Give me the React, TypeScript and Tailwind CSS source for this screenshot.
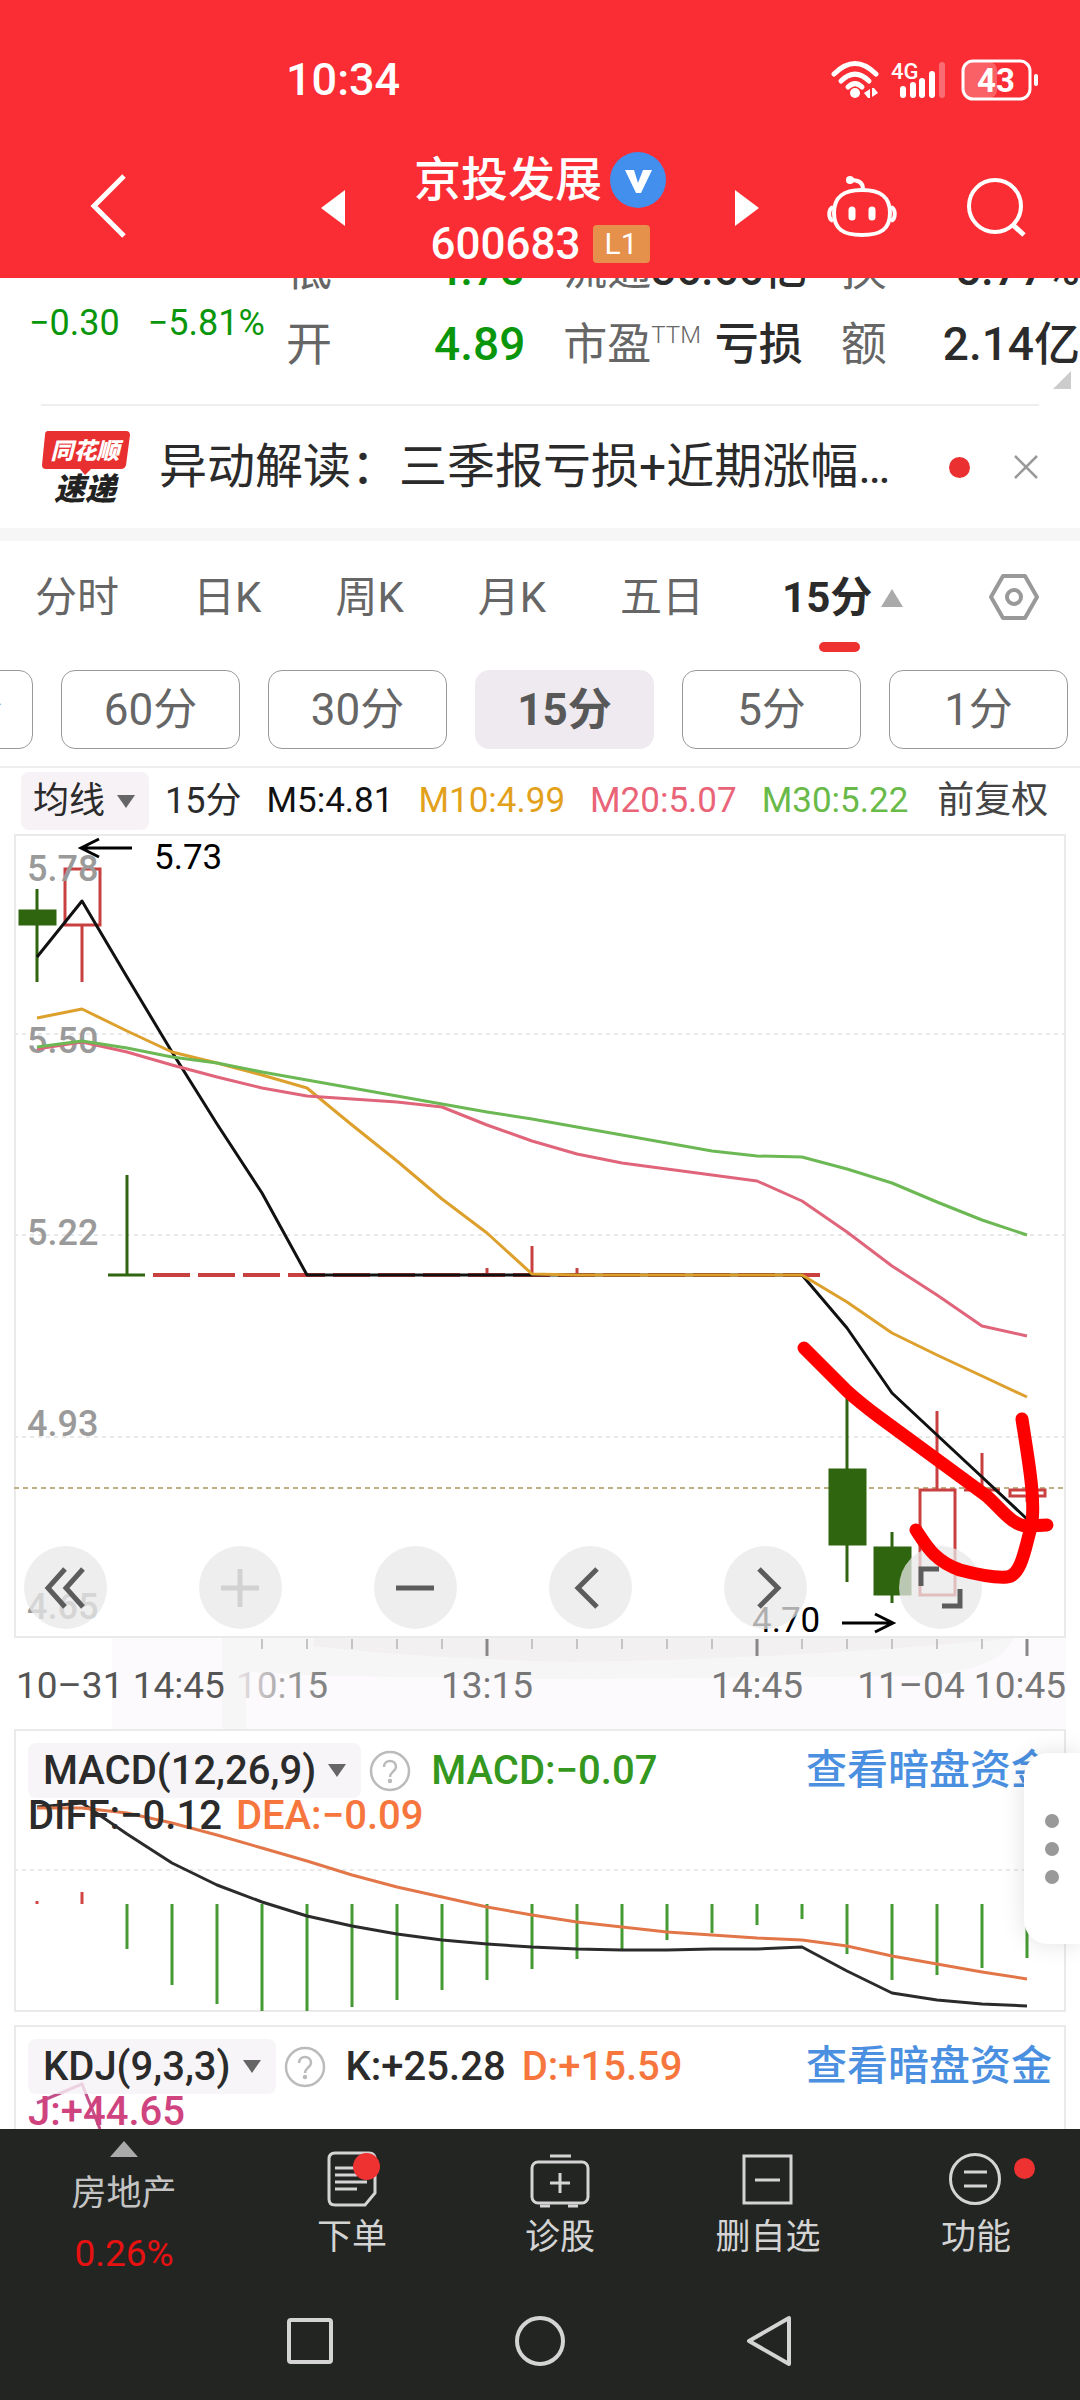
import type { ReactNode } from 'react';
import clsx from 'clsx';

const STEP = 45;
const X0 = 23;
const xAt = (i: number) => X0 + STEP * i;
const toPoints = (ys: number[]) => ys.map((y, i) => `${xAt(i)},${y}`).join(' ');

// Chart series, in chart units measured from the top of each panel
const MA5 = [123, 67, 143, 218, 290, 359, 441, 441, 441, 441, 441, 441, 441, 441, 441, 441, 441, 441, 494, 559, 601, 643, 685];
const MA10 = [184, 175, 197, 218, 229, 241, 254, 291, 327, 365, 399, 440, 441, 441, 441, 441, 441, 441, 468, 499, 521, 542, 563];
const MA20 = [215, 208, 218, 231, 243, 254, 262, 265, 268, 273, 291, 307, 320, 329, 335, 341, 347, 367, 398, 432, 461, 492, 502];
const MA30 = [213, 207, 214, 223, 229, 238, 246, 254, 262, 270, 278, 285, 293, 301, 309, 317, 322, 323, 335, 349, 368, 386, 401];

const DIFF = [78, 74, 105, 134, 156, 173, 187, 197, 205, 211, 215, 218, 220, 221, 221, 220, 220, 218, 242, 264, 271, 275, 277];
const DEA = [79, 79, 84, 94, 106, 119, 132, 146, 158, 168, 178, 186, 193, 198, 203, 206, 209, 211, 217, 227, 235, 243, 250];
const MACD_BARS = [-3, -12, 45, 81, 100, 107, 107, 103, 96, 86, 76, 65, 55, 45, 36, 29, 21, 15, 50, 76, 71, 64, 54];

type Candle = { i: number; high: number; low: number; top: number; bottom: number; up: boolean };

const CANDLES: Candle[] = [
  { i: 0, high: 55, low: 148, top: 77, bottom: 90, up: false },
  { i: 1, high: 35, low: 148, top: 35, bottom: 91, up: true },
  { i: 18, high: 564, low: 748, top: 636, bottom: 710, up: false },
  { i: 19, high: 698, low: 769, top: 714, bottom: 760, up: false },
  { i: 20, high: 577, low: 761, top: 656, bottom: 761, up: true },
  { i: 22, high: 656, low: 668, top: 656, bottom: 662, up: true },
];

const FLAT_BARS = [3, 4, 5, 6, 7, 8, 9, 10, 11, 12, 13, 14, 15, 16, 17];
const TICKS = [5, 6, 7, 8, 9, 10, 11, 12, 13, 14, 15, 16, 17, 18, 19, 20, 21, 22];
const MAJOR_TICKS = [10, 16, 22];

const TABS = ['分时', '日K', '周K', '月K', '五日'];
const PERIODS = ['120分', '60分', '30分', '15分', '5分', '1分'];

function StatusBar() {
  return (
    <div className="flex items-center justify-between pt-[52px] pl-[286px] pr-[41px] text-white">
      <span className="text-[45px] leading-[56px] font-medium">10:34</span>
      <div className="flex items-center">
        <svg width="50" height="40" viewBox="0 0 50 40" fill="none" stroke="#fff" strokeWidth="5" strokeLinecap="round">
          <path d="M3 14Q24 -7 45 14" />
          <path d="M10 21Q24 7 38 21" />
          <path d="M17 27Q24 20 31 27" />
          <circle cx="24" cy="33" r="5" fill="#fff" stroke="none" />
          <path d="M33 33l6-4v9h-2zM47 33l-6 4v-9h2z" fill="#fff" stroke="none" />
        </svg>
        <svg width="58" height="40" viewBox="0 0 58 40" className="ml-[10px] mr-3">
          <text x="0" y="19" fontSize="22" fontWeight="500" fill="#fff">4G</text>
          <g stroke="#fff" strokeWidth="6" strokeLinecap="round">
            <path d="M12 29v6M22 25v10M31 21v14M41 14v21" />
            <path d="M51 5v30" opacity="0.3" />
          </g>
        </svg>
        <svg width="78" height="42" viewBox="0 0 78 42">
          <rect x="3" y="3" width="33" height="36" rx="8" fill="#fff" opacity="0.25" />
          <rect x="2" y="2" width="67" height="38" rx="10" fill="none" stroke="#fff" strokeWidth="3" />
          <rect x="73" y="15" width="4" height="12" rx="2" fill="#fff" />
          <text x="35" y="33" fontSize="33" fontWeight="700" fill="#fff" textAnchor="middle">43</text>
        </svg>
      </div>
    </div>
  );
}

function TitleBar() {
  return (
    <div className="grid grid-cols-[1fr_auto_1fr] items-center pt-10 pb-[2px] text-white">
      <div className="flex items-center justify-between pb-3 pl-[88px] pr-[68px]">
        <button type="button" aria-label="返回">
          <svg width="40" height="66" viewBox="0 0 40 66" fill="none" stroke="#fff" strokeWidth="5">
            <path d="M36 3L6 33l30 30" />
          </svg>
        </button>
        <button type="button" aria-label="上一只" className="pt-1">
          <svg width="26" height="36" viewBox="0 0 26 36" fill="#fff"><path d="M25 0v36L1 18z" /></svg>
        </button>
      </div>
      <div className="flex flex-col items-center">
        <div className="flex items-center gap-2">
          <h1 className="text-[47px] leading-[64px] font-medium">京投发展</h1>
          <svg width="56" height="56" viewBox="0 0 56 56">
            <circle cx="28" cy="28" r="28" fill="#428fee" />
            <path d="M15 18h9l4 13 5-13h9L31 41h-5z" fill="#fff" />
          </svg>
        </div>
        <div className="flex items-center gap-3">
          <span className="text-[44px] leading-[64px] font-medium">600683</span>
          <span className="rounded-sm bg-[#e5904b] px-3 text-[30px] leading-[38px]">L1</span>
        </div>
      </div>
      <div className="flex items-center justify-between pb-3 pl-[68px] pr-[52px]">
        <button type="button" aria-label="下一只" className="pt-1">
          <svg width="26" height="36" viewBox="0 0 26 36" fill="#fff"><path d="M1 0v36l24-18z" /></svg>
        </button>
        <button type="button" aria-label="智能助手">
          <svg width="70" height="66" viewBox="0 0 70 66" fill="none" stroke="#fff" strokeWidth="4">
            <path d="M35 17C54 17 63 24 63 40C63 56 54 62 35 62S7 56 7 40C7 24 16 17 35 17Z" />
            <path d="M6 34C1 36 1 46 6 48M64 34c5 2 5 12 0 14" />
            <path d="M36 16C36 9 30 7 24 7" />
            <circle cx="23" cy="7" r="4" fill="#fff" stroke="none" />
            <path d="M25 37v7M45 37v7" strokeWidth="7" strokeLinecap="round" />
          </svg>
        </button>
        <button type="button" aria-label="搜索">
          <svg width="64" height="64" viewBox="0 0 64 64" fill="none" stroke="#fff" strokeWidth="4">
            <circle cx="31" cy="32" r="26" />
            <path d="M49 51l11 10" strokeWidth="5" />
          </svg>
        </button>
      </div>
    </div>
  );
}

function Stat({ label, sup, value, green }: { label: string; sup?: string; value: string; green?: boolean }) {
  return (
    <div className="flex h-[75px] items-center justify-between whitespace-nowrap">
      <dt className="flex items-center text-[46px] text-[#666]">
        <span className={label.length > 1 ? 'text-[44px]' : undefined}>{label}</span>
        {sup && <span className="pb-5 text-[24px] leading-[24px] font-light">{sup}</span>}
      </dt>
      <dd
        className={clsx(
          'font-medium',
          label.length > 1 ? 'text-[44px]' : 'text-[46px]',
          green ? 'text-[#0a960a]' : 'text-[#2b2b2b]',
        )}
      >
        {value}
      </dd>
    </div>
  );
}

function Quote() {
  return (
    <section className="relative h-[126px] overflow-hidden">
      <div className="flex">
        <div className="flex w-[286px] shrink-0 gap-[28px] pt-[25px] pl-[29px] text-[36px] leading-[40px] whitespace-nowrap text-[#0a960a]">
          <span>−0.30</span>
          <span>−5.81%</span>
        </div>
        <dl className="-mt-[46px] grid flex-1 grid-cols-[minmax(0,1fr)_minmax(0,1fr)_minmax(0,1fr)] gap-x-[38px]">
          <Stat label="低" value="4.70" green />
          <Stat label="流通" value="36.66亿" />
          <Stat label="换" value="5.77%" />
          <Stat label="开" value="4.89" green />
          <Stat label="市盈" sup="TTM" value="亏损" />
          <Stat label="额" value="2.14亿" />
        </dl>
      </div>
      <svg width="18" height="18" viewBox="0 0 18 18" className="absolute right-[9px] bottom-[15px]">
        <path d="M18 0v18H0z" fill="#ccc" />
      </svg>
    </section>
  );
}

function NewsBar() {
  return (
    <section className="mx-[41px] flex items-center border-t-2 border-[#eee] py-6">
      <svg width="90" height="74" viewBox="0 0 90 74" className="shrink-0" fontStyle="italic" fontWeight="900">
        <path d="M7 1h78q4 0 4 4l-4 30q-1 4-5 4H50l-6 6-5-6H5q-4 0-4-4L4 5q0-4 3-4z" fill="#e93030" />
        <text x="44" y="29" fontSize="23" fill="#fff" textAnchor="middle">同花顺</text>
        <text x="44" y="70" fontSize="31" fill="#222" textAnchor="middle">速递</text>
      </svg>
      <a href="#news" className="ml-7 min-w-0 flex-1 truncate text-[48px] leading-[72px] text-[#2b2b2b]">
        异动解读：三季报亏损+近期涨幅…
      </a>
      <span className="mx-[43px] size-[21px] shrink-0 rounded-full bg-[#ea3030]" />
      <button type="button" aria-label="关闭" className="shrink-0">
        <svg width="26" height="26" viewBox="0 0 26 26" stroke="#999" strokeWidth="2.5"><path d="M2 2l22 22M24 2L2 24" /></svg>
      </button>
    </section>
  );
}

function ChartTabs() {
  return (
    <nav className="flex items-start justify-between border-t-[13px] border-[#f6f6f6] pr-[41px] pl-[35px] text-[42px] leading-[64px] text-[#666]">
      <div className="flex items-start gap-[74px] pt-[25px]">
        {TABS.map((t) => (
          <button key={t} type="button">{t}</button>
        ))}
        <button type="button" className="relative flex items-center gap-2 pb-10 pl-1 font-bold text-[#2b2b2b]">
          15分
          <svg width="24" height="20" viewBox="0 0 24 20"><path d="M12 1l11 18H1z" fill="#aaa" /></svg>
          <span className="absolute bottom-[18px] left-[41px] h-[10px] w-[41px] rounded-full bg-[#ee3131]" />
        </button>
      </div>
      <button type="button" aria-label="设置" className="pt-8">
        <svg width="50" height="48" viewBox="0 0 50 48" fill="none" stroke="#999" strokeWidth="4" strokeLinejoin="round">
          <path d="M14 3h22l12 21-12 21H14L2 24z" />
          <circle cx="25" cy="24" r="7" />
        </svg>
      </button>
    </nav>
  );
}

function PeriodBar() {
  return (
    <div className="overflow-hidden border-b-2 border-[#eee] pb-[17px]">
      <div className="-ml-[146px] flex gap-[28px]">
        {PERIODS.map((p) => (
          <button
            key={p}
            type="button"
            className={clsx(
              'h-[79px] w-[179px] shrink-0 rounded-[14px] border text-[44px] leading-[64px]',
              p === '15分' ? 'border-[#efeaef] bg-[#efeaef] font-bold text-[#585858]' : 'border-[#999] text-[#666]',
            )}
          >
            {p}
          </button>
        ))}
      </div>
    </div>
  );
}

function Caret() {
  return <svg width="18" height="13" viewBox="0 0 18 13"><path d="M0 0h18L9 13z" fill="#666" /></svg>;
}

function AverageLegend() {
  return (
    <div className="flex items-center gap-[25px] py-1 pl-[21px] text-[35px] leading-[58px] whitespace-nowrap">
      <div className="flex gap-4 text-[36px] text-[#2b2b2b]">
        <button type="button" className="flex items-center gap-3 rounded-lg bg-[#f6f2f6] pr-[14px] pl-3">均线<Caret /></button>
        <span>15分</span>
      </div>
      <span className="text-[#111]">M5:4.81</span>
      <span className="text-[#e3a11b]">M10:4.99</span>
      <span className="text-[#ea6478]">M20:5.07</span>
      <span className="text-[#69ba48]">M30:5.22</span>
      <button type="button" className="ml-1 text-[37px] text-[#444]">前复权</button>
    </div>
  );
}

function RoundButton({ label, faded, children }: { label: string; faded?: boolean; children: ReactNode }) {
  return (
    <button type="button" aria-label={label} className="size-[83px] shrink-0 rounded-full bg-[#e8e8e8]/75">
      <svg
        width="83" height="83" viewBox="0 0 83 83"
        fill="none" stroke={faded ? '#d2d2d2' : '#5c5c5c'} strokeWidth="5"
      >
        {children}
      </svg>
    </button>
  );
}

function PriceChart() {
  return (
    <div className="relative">
      <svg viewBox="0 0 1052 804" className="block w-full" fill="none">
        <rect x="1" y="1" width="1050" height="802" stroke="#eaeaea" strokeWidth="2" />
        <path d="M0 200H1052M0 401H1052M0 603H1052" stroke="#e8e8e8" strokeWidth="2" strokeDasharray="4 4" />
        <path d="M0 654H1052" stroke="#bfb083" strokeWidth="2" strokeDasharray="5 4" />

        {CANDLES.map((c) => {
          const x = xAt(c.i);
          const color = c.up ? '#c94040' : '#306510';
          return (
            <g key={c.i} stroke={color} strokeWidth="3">
              <path d={`M${x} ${c.high}V${c.top}M${x} ${c.bottom}V${c.low}`} />
              <rect x={x - 17} y={c.top} width="35" height={c.bottom - c.top} fill={c.up ? 'none' : color} />
            </g>
          );
        })}
        <path d="M113 341V441M94 441h37" stroke="#306510" strokeWidth="3" />
        <g stroke="#c94040" strokeWidth="4">
          {FLAT_BARS.map((i) => (
            <path key={i} d={`M${xAt(i) - 19} 441h37`} />
          ))}
          <path d="M473 434v7M518 412v29M563 434v7M968 619v37M950 656h36" strokeWidth="3" />
        </g>

        <g fontSize="36" fontWeight="500" fill="#9a9a9a">
          <text x="13" y="47">5.78</text>
          <text x="13" y="219">5.50</text>
          <text x="13" y="411">5.22</text>
          <text x="13" y="602">4.93</text>
          <text x="13" y="785">4.65</text>
        </g>

        <g strokeWidth="3" strokeLinejoin="round">
          <polyline points={toPoints(MA5)} stroke="#111" />
          <polyline points={toPoints(MA10)} stroke="#dda02c" />
          <polyline points={toPoints(MA20)} stroke="#e0647a" />
          <polyline points={toPoints(MA30)} stroke="#6cb854" />
        </g>

        <g fontSize="35" fill="#000">
          <text x="140" y="35">5.73</text>
          <text x="738" y="798">4.70</text>
        </g>
        <path d="M118 14H68M85 5L67 14l18 9M828 789h50M861 780l18 9-18 9" stroke="#000" strokeWidth="3" />
      </svg>

      <div className="absolute bottom-[9px] left-[10px] flex gap-[92px]">
        <RoundButton label="最早"><path d="M41 23L24 42l17 19M59 23L42 42l17 19" /></RoundButton>
        <RoundButton label="放大" faded><path d="M22 42h38M41 23v38" /></RoundButton>
        <RoundButton label="缩小"><path d="M22 42h38" /></RoundButton>
        <RoundButton label="向左"><path d="M48 23L29 42l19 19" /></RoundButton>
        <RoundButton label="向右"><path d="M35 23l19 19-19 19" /></RoundButton>
        <RoundButton label="全屏"><path d="M22 40V23h18M61 43v17H43" /></RoundButton>
      </div>

      {/* Hand-drawn annotation */}
      <svg
        viewBox="0 0 1052 804" className="pointer-events-none absolute inset-0 w-full"
        fill="none" stroke="#f00" strokeWidth="13" strokeLinecap="round" strokeLinejoin="round"
      >
        <path d="M790 514L833 557Q845 568 865 583L970 660C984 670 997 693 1015 692L1033 691" />
        <path d="M1008 585C1012 613 1023 668 1017 693C1011 715 1007 742 993 743C980 744 961 740 946 736C920 727 912 711 902 696" />
      </svg>
    </div>
  );
}

function TimeAxis() {
  return (
    <svg viewBox="0 0 1052 91" className="block w-full">
      <defs>
        <linearGradient id="axisFade" x1="0" x2="1">
          <stop offset="0" stopColor="#eee6ea" />
          <stop offset="0.6" stopColor="#999" />
          <stop offset="1" stopColor="#808080" />
        </linearGradient>
      </defs>
      <rect x="98" width="954" height="91" fill="#fdfafd" />
      <path d="M208 0H1000Q985 34 900 38L560 41L320 38L232 34V91H208Z" fill="#f6f6f6" />
      <path d="M300 0H1000Q800 20 560 24Q400 20 300 8Z" fill="#f3f0f2" />
      {TICKS.map((i) => {
        const major = MAJOR_TICKS.includes(i);
        return (
          <path
            key={i}
            d={`M${xAt(i)} 1v${major ? 17 : 10}`}
            stroke={major ? '#888' : '#c4c4c4'}
            strokeWidth={major ? 3 : 2}
          />
        );
      })}
      <g fontSize="37" fill="#777">
        <text x="2" y="60" fill="#555">10–31 14:45</text>
        <text x="222" y="60" fill="url(#axisFade)">10:15</text>
        <text x="473" y="60" textAnchor="middle">13:15</text>
        <text x="743" y="60" textAnchor="middle">14:45</text>
        <text x="1052" y="60" textAnchor="end">11–04 10:45</text>
      </g>
    </svg>
  );
}

function IndicatorHead({ name, children, extra }: { name: string; children: ReactNode; extra: ReactNode }) {
  return (
    <div className="absolute inset-x-0 top-[14px] pr-[14px] pl-[14px] text-[40px] leading-[55px] font-medium text-[#2b2b2b]">
      <div className="flex items-center whitespace-nowrap">
        <button type="button" className="flex items-center gap-3 rounded-lg bg-[#f6f2f6]/80 px-[15px]">
          {name}
          <Caret />
        </button>
        <button type="button" aria-label={`${name} 说明`} className="ml-2">
          <svg width="42" height="42" viewBox="0 0 42 42" fill="none" stroke="#bbb" strokeWidth="2.500">
            <circle cx="21" cy="21" r="19" />
            <path d="M15 17c0-8 12-8 12 0 0 4-6 5-6 10" />
            <circle cx="21" cy="31" r="1" fill="#bbb" />
          </svg>
        </button>
        <div className="ml-5 flex gap-4">{children}</div>
        <a href="#funds" className="ml-auto text-[41px] text-[#4a8fe0]">查看暗盘资金</a>
      </div>
      <div className="flex gap-[14px] leading-[36px]">{extra}</div>
    </div>
  );
}

function MacdPanel() {
  return (
    <section className="relative">
      <svg viewBox="0 0 1052 283" className="block w-full" fill="none">
        <rect x="1" y="1" width="1050" height="281" stroke="#eaeaea" strokeWidth="2" />
        <path d="M0 141H1052" stroke="#e8e8e8" strokeWidth="2" strokeDasharray="4 4" />
        {MACD_BARS.map((h, i) => (
          <path key={i} d={`M${xAt(i)} 175v${h}`} stroke={h < 0 ? '#d24545' : '#459a34'} strokeWidth="3" />
        ))}
        <g strokeWidth="3" strokeLinejoin="round">
          <polyline points={toPoints(DIFF)} stroke="#2b2b2b" />
          <polyline points={toPoints(DEA)} stroke="#e27648" />
        </g>
      </svg>
      <IndicatorHead
        name="MACD(12,26,9)"
        extra={<><span>DIFF:−0.12</span><span className="text-[#f6763e]">DEA:−0.09</span></>}
      >
        <span className="text-[#349820]">MACD:−0.07</span>
      </IndicatorHead>
    </section>
  );
}

function KdjPanel() {
  return (
    <section className="relative mt-[13px] h-[104px] overflow-hidden">
      <svg viewBox="0 0 1052 104" className="block w-full" fill="none">
        <path d="M1 104V1H1051V104" stroke="#eaeaea" strokeWidth="2" />
        <path d="M23 78L68 59L86 104" stroke="#c4508a" strokeWidth="3" />
      </svg>
      <IndicatorHead name="KDJ(9,3,3)" extra={<span className="text-[#cf437f]">J:+44.65</span>}>
        <span>K:+25.28</span>
        <span className="text-[#f6763e]">D:+15.59</span>
      </IndicatorHead>
    </section>
  );
}

function ToolItem({ label, children, badge }: { label: string; children: ReactNode; badge?: ReactNode }) {
  return (
    <button type="button" className="flex flex-col items-center pt-[20px]">
      <span className="relative">
        <svg width="60" height="60" viewBox="0 0 60 60" fill="none" stroke="#d4d4d4" strokeWidth="3">{children}</svg>
        {badge}
      </span>
      <span className="mt-[5px] text-[35px] leading-[48px] text-[#d4d4d4]">{label}</span>
    </button>
  );
}

function BottomBar() {
  return (
    <footer className="bg-[#222522]">
      <div className="grid grid-cols-[248fr_208fr_208fr_208fr_208fr] items-start">
        <button type="button" className="flex flex-col items-center pt-3 text-[35px] leading-[60px]">
          <svg width="28" height="16" viewBox="0 0 28 16"><path d="M14 0l14 16H0z" fill="#aaa" /></svg>
          <span className="mt-[7px] text-[#c4c4c4]">房地产</span>
          <span className="text-[37px] text-[#e61212]">0.26%</span>
        </button>
        <ToolItem
          label="下单"
          badge={<span className="absolute top-1 right-[2px] size-[27px] rounded-full bg-[#ee3131]" />}
        >
          <path d="M13 4h34q6 0 6 6v34L43 56H13q-6 0-6-6V10q0-6 6-6z" />
          <path d="M13 19h22M13 26h22M13 33h32M13 40h22" />
        </ToolItem>
        <ToolItem label="诊股">
          <rect x="2" y="13" width="56" height="41" rx="6" />
          <path d="M20 7h21M30 24v20M20 34h20M10 57h10M38 57h10" />
        </ToolItem>
        <ToolItem label="删自选">
          <rect x="6" y="7" width="47" height="47" />
          <path d="M17 31h25" />
        </ToolItem>
        <ToolItem
          label="功能"
          badge={<span className="absolute top-[9px] -right-[29px] size-[21px] rounded-full bg-[#ee3131]" />}
        >
          <circle cx="29" cy="30" r="24.500" />
          <path d="M18 23h23M18 37h23" />
        </ToolItem>
      </div>
      <nav className="flex items-center justify-center gap-[178px] pt-[31px] pb-[34px]">
        <button type="button" aria-label="最近任务">
          <svg width="52" height="52" viewBox="0 0 52 52" fill="none" stroke="#d4d4d4" strokeWidth="4">
            <rect x="5" y="5" width="42" height="42" rx="2" />
          </svg>
        </button>
        <button type="button" aria-label="主屏幕">
          <svg width="52" height="52" viewBox="0 0 52 52" fill="none" stroke="#d4d4d4" strokeWidth="4">
            <circle cx="26" cy="26" r="23" />
          </svg>
        </button>
        <button type="button" aria-label="返回上页">
          <svg width="52" height="52" viewBox="0 0 52 52" fill="none" stroke="#d4d4d4" strokeWidth="4" strokeLinejoin="round">
            <path d="M45 3v46L5 26z" />
          </svg>
        </button>
      </nav>
    </footer>
  );
}

export default function App() {
  return (
    <div className="flex min-h-screen flex-col bg-white font-[family-name:Roboto,'Noto_Sans_CJK_SC',sans-serif]">
      <header className="bg-[#f92d33]">
        <StatusBar />
        <TitleBar />
      </header>
      <main className="flex-1 overflow-hidden">
        <Quote />
        <NewsBar />
        <ChartTabs />
        <PeriodBar />
        <AverageLegend />
        <div className="relative mx-[14px]">
          <PriceChart />
          <TimeAxis />
          <MacdPanel />
          <KdjPanel />
          {/* Side drawer handle */}
          <button
            type="button"
            aria-label="展开工具"
            className="absolute -right-[14px] bottom-[185px] flex h-[191px] w-14 flex-col items-center justify-center gap-[14px] rounded-l-3xl bg-white shadow-[0_0_24px_rgba(0,0,0,0.12)]"
          >
            <span className="size-[14px] rounded-full bg-[#999]" />
            <span className="size-[14px] rounded-full bg-[#999]" />
            <span className="size-[14px] rounded-full bg-[#999]" />
          </button>
        </div>
      </main>
      <BottomBar />
    </div>
  );
}
